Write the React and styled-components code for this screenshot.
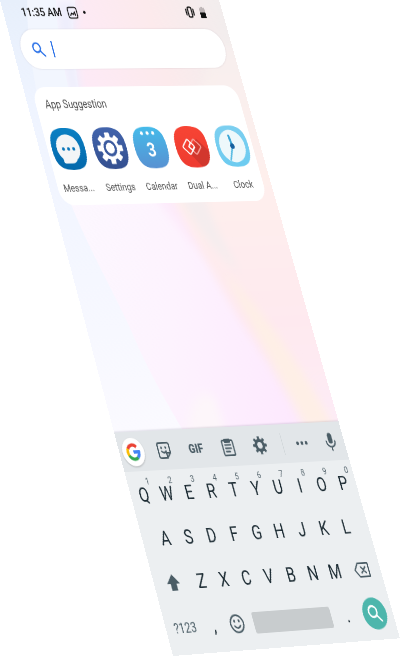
import React, { useLayoutEffect, useRef, useState } from "react";
import styled, { createGlobalStyle } from "styled-components";

const SCREEN_W = 360;
const SCREEN_H = 800;

/* Corners of the tilted screen, as fractions of the stage: TL, TR, BR, BL. */
const CORNERS = [
  [0, 0],
  [0.5475, 0],
  [1, 0.973],
  [0.4325, 1],
];

function projection(width, height) {
  const [[x0, y0], [x1, y1], [x2, y2], [x3, y3]] = CORNERS.map(([u, v]) => [
    u * width,
    v * height,
  ]);
  const dx1 = x1 - x2;
  const dx2 = x3 - x2;
  const dy1 = y1 - y2;
  const dy2 = y3 - y2;
  const sx = x0 - x1 + x2 - x3;
  const sy = y0 - y1 + y2 - y3;
  const det = dx1 * dy2 - dx2 * dy1;
  const g = (sx * dy2 - dx2 * sy) / det;
  const h = (dx1 * sy - sx * dy1) / det;
  const m = [
    (x1 - x0 + g * x1) / SCREEN_W, (y1 - y0 + g * y1) / SCREEN_W, 0, g / SCREEN_W,
    (x3 - x0 + h * x3) / SCREEN_H, (y3 - y0 + h * y3) / SCREEN_H, 0, h / SCREEN_H,
    0, 0, 1, 0,
    x0, y0, 0, 1,
  ];
  return `matrix3d(${m.join(",")})`;
}

const GlobalStyle = createGlobalStyle`
  * { box-sizing: border-box; }
  html, body { margin: 0; background: #fff; overflow: hidden; }
  button, input {
    font: inherit; color: inherit; border: 0; padding: 0; margin: 0;
    background: none; outline: none;
  }
  svg { display: block; }
`;

const Stage = styled.main`
  width: 100%;
  aspect-ratio: 400 / 656;
  overflow: hidden;
`;

const Screen = styled.div`
  position: relative;
  display: flex;
  flex-direction: column;
  width: ${SCREEN_W}px;
  height: ${SCREEN_H}px;
  overflow: hidden;
  transform-origin: 0 0;
  font-family: Roboto, "Liberation Sans", sans-serif;
  color: #263238;
`;

const WallpaperArt = styled.svg`
  position: absolute;
  inset: 0;
  width: 100%;
  height: 100%;
`;

const StatusBar = styled.header`
  position: relative;
  display: flex;
  align-items: center;
  gap: 9px;
  height: 32px;
  padding: 0 29px;
  color: #111;
  font-size: 15px;
  font-weight: 500;
`;

const Dot = styled.span`
  width: 4px;
  height: 4px;
  border-radius: 50%;
  background: #111;
`;

const StatusEnd = styled.div`
  display: flex;
  align-items: center;
  gap: 9px;
  margin-left: auto;
`;

const SearchBox = styled.label`
  position: relative;
  display: flex;
  align-items: center;
  gap: 12px;
  height: 51px;
  margin: 6px 13px 0;
  padding: 0 18px;
  border-radius: 26px;
  background: #fff;
  box-shadow: 0 0 2px rgba(120, 100, 120, 0.25);
`;

const Caret = styled.span`
  width: 2px;
  height: 21px;
  background: #2f74e8;
`;

const SearchInput = styled.input`
  flex: 1;
  min-width: 0;
  font-size: 16px;
`;

const Card = styled.section`
  position: relative;
  height: 149px;
  margin: 23px 13px 0;
  padding-top: 12px;
  border-radius: 20px;
  background: #fff;
`;

const CardTitle = styled.h2`
  margin: 0 15px;
  font-size: 14px;
  line-height: 20px;
  font-weight: 400;
  color: #4c4c4c;
`;

const AppGrid = styled.div`
  display: grid;
  grid-template-columns: repeat(5, 1fr);
  margin-top: 20px;
`;

const AppButton = styled.button`
  display: flex;
  flex-direction: column;
  align-items: center;
  gap: 14px;
  font-size: 13px;
  line-height: 18px;
  color: #555;
`;

const Keyboard = styled.section`
  position: relative;
  margin-top: auto;
  height: 262px;
  background: #eceff1;
  box-shadow: 0 -1px 2px rgba(90, 90, 110, 0.2);
`;

const Toolbar = styled.div`
  display: flex;
  align-items: center;
  height: 47px;
  background: #e2e6e9;
  color: #4b5d66;
`;

const Tool = styled.button`
  display: flex;
  align-items: center;
  justify-content: center;
  flex: none;
  width: ${(p) => (p.$edge ? 44 : 51)}px;
  height: 47px;
  font-size: 15px;
  font-weight: 900;
`;

const GoogleBadge = styled.span`
  display: flex;
  align-items: center;
  justify-content: center;
  width: 34px;
  height: 34px;
  border-radius: 50%;
  background: #fff;
  box-shadow: 0 1px 2px rgba(0, 0, 0, 0.25);
`;

const Divider = styled.span`
  flex: none;
  width: 1px;
  height: 26px;
  margin: 0 5px 0 11px;
  background: #cfd5d8;
`;

const Keys = styled.div`
  display: grid;
  grid-auto-rows: 52px;
  padding-top: 2px;
`;

const KeyRow = styled.div`
  display: flex;
  justify-content: center;
  align-items: center;
  padding: 0 3px;
`;

const Key = styled.button`
  position: relative;
  display: flex;
  align-items: center;
  justify-content: center;
  flex: ${(p) => p.$grow || 1} 1 0;
  max-width: ${(p) => (p.$grow ? "none" : "36px")};
  height: 52px;
  font-size: ${(p) => (p.$small ? 16 : 23)}px;
  color: ${(p) => (p.$small ? "#4b5d66" : "#1c2b33")};
`;

const Hint = styled.span`
  position: absolute;
  top: 4px;
  right: 4px;
  font-size: 11px;
  line-height: 14px;
  color: #55656d;
`;

const Space = styled.button`
  flex: 0 0 124px;
  height: 25px;
  margin: 0 8px;
  border-radius: 3px;
  background: #c8ccce;
`;

const Enter = styled.button`
  display: flex;
  align-items: center;
  justify-content: center;
  flex: none;
  width: 38px;
  height: 38px;
  margin: 0 7px;
  border-radius: 50%;
  background: #4db6ac;
  color: #fff;
`;

function Wallpaper() {
  return (
    <WallpaperArt viewBox="0 0 360 800" preserveAspectRatio="none" aria-hidden="true">
      <defs>
        <linearGradient id="wpBlue" x1="0" y1="0" x2="0" y2="1">
          <stop offset="0" stopColor="#e7effb" />
          <stop offset="0.25" stopColor="#eff4ff" />
          <stop offset="0.65" stopColor="#f5f7ff" />
          <stop offset="1" stopColor="#fbfaff" />
        </linearGradient>
        <linearGradient id="wpTop" x1="0" y1="0" x2="1" y2="0">
          <stop offset="0" stopColor="#fdeaf7" />
          <stop offset="0.55" stopColor="#fceaec" />
          <stop offset="1" stopColor="#f2eded" />
        </linearGradient>
        <linearGradient id="wpMid" x1="0" y1="0.2" x2="1" y2="0.9">
          <stop offset="0" stopColor="#fcfaff" />
          <stop offset="0.5" stopColor="#fdf3fe" />
          <stop offset="1" stopColor="#fde6fe" />
        </linearGradient>
        <linearGradient id="wpRight" x1="0" y1="0" x2="0" y2="1">
          <stop offset="0" stopColor="#f7efee" />
          <stop offset="0.35" stopColor="#feefec" />
          <stop offset="0.7" stopColor="#fee9ef" />
          <stop offset="1" stopColor="#fdecf7" />
        </linearGradient>
        <filter id="wpSoft" x="-20%" y="-20%" width="140%" height="140%">
          <feGaussianBlur stdDeviation="7" />
        </filter>
      </defs>
      <rect width="360" height="560" fill="url(#wpMid)" />
      <path d="M122 0C100 40 90 90 86 140H360V0Z" fill="url(#wpTop)" />
      <path d="M90 0H126C104 40 94 80 90 130H70C70 80 76 40 90 0Z" fill="#eeeefc" filter="url(#wpSoft)" />
      <path d="M44 0H90C76 50 72 90 72 140H20C20 80 28 40 44 0Z" fill="#f2f6fe" />
      <path d="M150 230H215L228 340L200 310Z" fill="#fdebfb" filter="url(#wpSoft)" />
      <path d="M190 250C214 320 232 380 256 430C274 470 286 500 300 560H400V60H330Z" fill="url(#wpRight)" filter="url(#wpSoft)" />
      <path d="M205 250L245 250C245 290 262 330 268 350C240 330 215 290 205 250Z" fill="#f5edee" filter="url(#wpSoft)" />
      <path d="M244 350C280 390 320 450 350 545H306C290 480 262 420 244 350Z" fill="#feefe6" filter="url(#wpSoft)" />
      <path d="M105 560C130 500 150 490 172 500L176 560Z" fill="#fdf6fa" filter="url(#wpSoft)" />
      <path d="M0 0H44C26 50 16 110 20 190C24 300 56 350 74 441C84 480 96 510 110 545H0Z" fill="url(#wpBlue)" />
    </WallpaperArt>
  );
}

const SQUIRCLE = "M26 0C45 0 52 7 52 26S45 52 26 52S0 45 0 26S7 0 26 0Z";

function gearPath(cx, cy, outer, inner, teeth) {
  const pts = [];
  for (let i = 0; i < teeth; i += 1) {
    [[-0.29, inner], [-0.2, outer], [0.2, outer], [0.29, inner]].forEach(([f, r]) => {
      const a = ((i + f) / teeth) * Math.PI * 2;
      pts.push(`${(cx + r * Math.sin(a)).toFixed(2)} ${(cy - r * Math.cos(a)).toFixed(2)}`);
    });
  }
  return `M${pts.join("L")}Z`;
}

function AppIcon({ from, to, id, children }) {
  return (
    <svg width="53" height="53" viewBox="0 0 52 52" aria-hidden="true">
      <defs>
        <linearGradient id={id} x1="0" y1="0" x2="0" y2="1">
          <stop offset="0" stopColor={from} />
          <stop offset="1" stopColor={to} />
        </linearGradient>
        <clipPath id={`${id}Clip`}><path d={SQUIRCLE} /></clipPath>
      </defs>
      <path d={SQUIRCLE} fill={`url(#${id})`} />
      <g clipPath={`url(#${id}Clip)`}>{children}</g>
    </svg>
  );
}

const APPS = [
  {
    label: "Messa...",
    icon: (
      <AppIcon id="messages" from="#0b80c3" to="#0468ab">
        <path d="M26 8A18 17 0 0 1 36 39Q33 44 27 44H17Q14 44 14 41V38A18 17 0 0 1 26 8Z" fill="#f3f5f7" />
        <circle cx="18" cy="26" r="2.3" fill="#0a76ba" />
        <circle cx="26" cy="26" r="2.3" fill="#0a76ba" />
        <circle cx="34" cy="26" r="2.3" fill="#0a76ba" />
      </AppIcon>
    ),
  },
  {
    label: "Settings",
    icon: (
      <AppIcon id="settings" from="#4264ac" to="#334f8f">
        <path d={gearPath(26, 26, 19, 14, 8)} fill="#fff" stroke="#fff" strokeWidth="1.5" strokeLinejoin="round" />
        <circle cx="26" cy="26" r="8.5" fill="#fff" stroke="#3b5a9e" strokeWidth="3.5" />
      </AppIcon>
    ),
  },
  {
    label: "Calendar",
    icon: (
      <AppIcon id="calendar" from="#45bbea" to="#5891d2">
        <circle cx="17" cy="8" r="2.3" fill="#fff" />
        <circle cx="26" cy="8" r="2.3" fill="#fff" />
        <circle cx="35" cy="8" r="2.3" fill="#fff" />
        <text x="26" y="37" textAnchor="middle" fill="#fff" fontFamily="Roboto, sans-serif" fontWeight="700" fontSize="24">3</text>
      </AppIcon>
    ),
  },
  {
    label: "Dual A...",
    icon: (
      <AppIcon id="dual" from="#f74434" to="#ee3b30">
        <path d="M21 35L36 16L60 40V60H42Z" fill="#c5352c" opacity="0.7" />
        <g fill="none" strokeWidth="1.8" strokeLinejoin="round">
          <rect x="-7" y="-7" width="14" height="14" rx="2" transform="translate(31 26) rotate(45)" stroke="#f7a29b" />
          <rect x="-7" y="-7" width="14" height="14" rx="2" transform="translate(21 26) rotate(45)" stroke="#fff" />
          <path d="M25 21L21 26L26 30L30 26" stroke="#fff" />
        </g>
      </AppIcon>
    ),
  },
  {
    label: "Clock",
    icon: (
      <AppIcon id="clock" from="#7ccff0" to="#6ccbf0">
        <circle cx="26" cy="26" r="20.5" fill="#edf8fb" />
        <path d="M26 26L24 13" stroke="#3da6d5" strokeWidth="3.5" strokeLinecap="round" />
        <path d="M26 26L18 43" stroke="#58bbe2" strokeWidth="2.5" strokeLinecap="round" />
        <circle cx="26" cy="26" r="3.5" fill="#16619f" />
      </AppIcon>
    ),
  },
];

const stroke = {
  fill: "none",
  stroke: "currentColor",
  strokeWidth: 2,
  strokeLinecap: "round",
  strokeLinejoin: "round",
};

function SearchIcon() {
  return (
    <svg width="24" height="24" viewBox="0 0 24 24" aria-hidden="true">
      <g {...stroke} strokeWidth="2.4">
        <circle cx="9.5" cy="9.5" r="6.5" />
        <path d="M14.5 14.5L21 21" />
      </g>
    </svg>
  );
}

function PictureIcon() {
  return (
    <svg width="17" height="17" viewBox="0 0 18 18" aria-hidden="true">
      <g {...stroke} strokeWidth="1.6">
        <rect x="1.5" y="1.5" width="15" height="15" rx="3" />
        <path d="M4.5 13L7.5 9.5L9.5 11.5L13 8V13" />
      </g>
    </svg>
  );
}

function VibrateIcon() {
  return (
    <svg width="15" height="16" viewBox="0 0 15 16" aria-hidden="true">
      <g {...stroke}>
        <rect x="4.5" y="1.5" width="6" height="13" rx="2" />
        <path d="M1.5 4.5V11.5M13.5 4.5V11.5" />
      </g>
    </svg>
  );
}

function BatteryIcon() {
  return (
    <svg width="9" height="15" viewBox="0 0 9 15" aria-hidden="true">
      <path d="M3 0H6V1.5H9V8H0V1.5H3Z" fill="#bdb5b6" />
      <path d="M0 7.5H9V15H0Z" fill="#111" />
    </svg>
  );
}

function GoogleIcon() {
  return (
    <svg width="22" height="22" viewBox="0 0 24 24" aria-hidden="true">
      <g fill="none" strokeWidth="4.4">
        <path d="M18.6 5.6A9.2 9.2 0 0 0 3.8 7.8" stroke="#ea4335" />
        <path d="M3.9 7.4A9.2 9.2 0 0 0 3.9 16.6" stroke="#fbbc05" />
        <path d="M3.7 16.2A9.2 9.2 0 0 0 18 19" stroke="#34a853" />
        <path d="M17.6 19.3A9.2 9.2 0 0 0 21.2 12H12" stroke="#4285f4" />
      </g>
    </svg>
  );
}

function StickerIcon() {
  return (
    <svg width="22" height="22" viewBox="0 0 22 22" aria-hidden="true">
      <g {...stroke}>
        <path d="M2 4.5Q2 2 4.5 2H17.5Q20 2 20 4.500V14L14 20H4.5Q2 20 2 17.5Z" />
        <path d="M14 20V14H20" />
        <path d="M7 12Q10.500 15.500 14 12" />
        <path d="M7.5 7.5V8M14 7.5V8" strokeWidth="2.6" />
      </g>
    </svg>
  );
}

function ClipboardIcon() {
  return (
    <svg width="22" height="24" viewBox="0 0 22 24" aria-hidden="true">
      <g {...stroke}>
        <rect x="2.5" y="4" width="17" height="18" rx="1.5" />
        <path d="M6.5 9.5H15.5M6.5 13.5H15.5M6.5 17.5H12.5" />
        <path d="M7 3H15V6H7Z" fill="currentColor" />
      </g>
    </svg>
  );
}

function GearIcon() {
  return (
    <svg width="24" height="24" viewBox="0 0 24 24" aria-hidden="true">
      <path
        fillRule="evenodd"
        fill="currentColor"
        d={`${gearPath(12, 12, 11, 8, 8)}M12 8a4 4 0 1 0 0 8a4 4 0 1 0 0-8Z`}
      />
    </svg>
  );
}

function MoreIcon() {
  return (
    <svg width="20" height="6" viewBox="0 0 20 6" fill="currentColor" aria-hidden="true">
      <circle cx="3" cy="3" r="2.2" />
      <circle cx="10" cy="3" r="2.2" />
      <circle cx="17" cy="3" r="2.2" />
    </svg>
  );
}

function MicIcon() {
  return (
    <svg width="24" height="24" viewBox="0 0 24 24" fill="currentColor" aria-hidden="true">
      <rect x="8.5" y="1.5" width="7" height="13" rx="3.5" />
      <path d="M5 11.5A7 7 0 0 0 19 11.5M12 18.5V22.5" {...stroke} />
    </svg>
  );
}

function ShiftIcon() {
  return (
    <svg width="22" height="22" viewBox="0 0 22 22" aria-hidden="true">
      <path d="M11 1L21 12H15.5V20H6.5V12H1Z" fill="#4b5d66" />
    </svg>
  );
}

function BackspaceIcon() {
  return (
    <svg width="26" height="20" viewBox="0 0 26 20" aria-hidden="true">
      <g {...stroke} stroke="#4b5d66">
        <path d="M8 2H24V18H8L2 10Z" />
        <path d="M12 6.5L19 13.5M19 6.5L12 13.5" />
      </g>
    </svg>
  );
}

function SmileIcon() {
  return (
    <svg width="24" height="24" viewBox="0 0 24 24" aria-hidden="true">
      <g {...stroke} stroke="#4b5d66">
        <circle cx="12" cy="12" r="10" />
        <path d="M7.5 14.5Q12 19.5 16.5 14.5" />
        <path d="M8.5 8.5V9.2M15.5 8.5V9.2" strokeWidth="2.8" />
      </g>
    </svg>
  );
}

export default function App() {
  const stageRef = useRef(null);
  const [transform, setTransform] = useState(projection(400, 656));

  useLayoutEffect(() => {
    const update = () => {
      const { width, height } = stageRef.current.getBoundingClientRect();
      setTransform(projection(width, height));
    };
    update();
    window.addEventListener("resize", update);
    return () => window.removeEventListener("resize", update);
  }, []);

  return (
    <>
      <GlobalStyle />
      <Stage ref={stageRef}>
        <Screen style={{ transform }}>
          <Wallpaper />
          <StatusBar>
            <span>11:35 AM</span>
            <PictureIcon />
            <Dot />
            <StatusEnd>
              <VibrateIcon />
              <BatteryIcon />
            </StatusEnd>
          </StatusBar>

          <SearchBox>
            <svg width="20" height="20" viewBox="0 0 24 24" aria-hidden="true">
              <g {...stroke} stroke="#2f74e8" strokeWidth="2.6">
                <circle cx="9" cy="9" r="7" />
                <path d="M14.5 14.5L22 22" />
              </g>
            </svg>
            <Caret />
            <SearchInput type="text" aria-label="Search" />
          </SearchBox>

          <Card>
            <CardTitle>App Suggestion</CardTitle>
            <AppGrid>
              {APPS.map((app) => (
                <AppButton key={app.label}>
                  {app.icon}
                  <span>{app.label}</span>
                </AppButton>
              ))}
            </AppGrid>
          </Card>

          <Keyboard aria-label="Keyboard">
            <Toolbar>
              <Tool $edge aria-label="Google">
                <GoogleBadge><GoogleIcon /></GoogleBadge>
              </Tool>
              <Tool aria-label="Stickers"><StickerIcon /></Tool>
              <Tool>GIF</Tool>
              <Tool aria-label="Clipboard"><ClipboardIcon /></Tool>
              <Tool aria-label="Settings"><GearIcon /></Tool>
              <Divider />
              <Tool aria-label="More"><MoreIcon /></Tool>
              <Tool $edge aria-label="Voice input"><MicIcon /></Tool>
            </Toolbar>
            <Keys>
              <KeyRow>
                {"QWERTYUIOP".split("").map((c, i) => (
                  <Key key={c}>
                    {c}
                    <Hint>{(i + 1) % 10}</Hint>
                  </Key>
                ))}
              </KeyRow>
              <KeyRow>
                {"ASDFGHJKL".split("").map((c) => <Key key={c}>{c}</Key>)}
              </KeyRow>
              <KeyRow>
                <Key $grow={3} aria-label="Shift"><ShiftIcon /></Key>
                {"ZXCVBNM".split("").map((c) => <Key key={c} $grow={2}>{c}</Key>)}
                <Key $grow={3} aria-label="Backspace"><BackspaceIcon /></Key>
              </KeyRow>
              <KeyRow>
                <Key $grow={3} $small>?123</Key>
                <Key $grow={2}>,</Key>
                <Key $grow={2} aria-label="Emoji"><SmileIcon /></Key>
                <Space aria-label="Space" />
                <Key $grow={2}>.</Key>
                <Enter aria-label="Search"><SearchIcon /></Enter>
              </KeyRow>
            </Keys>
          </Keyboard>
        </Screen>
      </Stage>
    </>
  );
}
